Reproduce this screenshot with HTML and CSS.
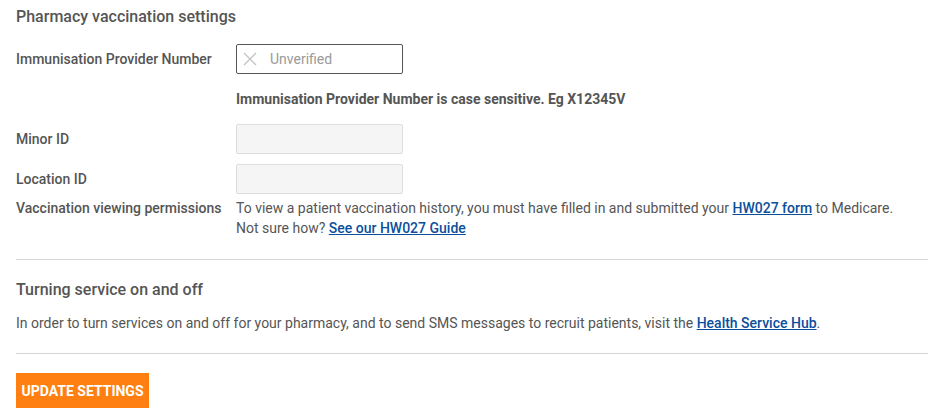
FILE: index.html
```html
<!DOCTYPE html>
<html>
<head>
<meta charset="utf-8">
<link rel="stylesheet" href="styles.css">
</head>
<body>
<div class="page">
  <h2 class="heading">Pharmacy vaccination settings</h2>
  <div class="row row-ipn">
    <div class="label">Immunisation Provider Number</div>
    <div class="field">
      <div class="input input-verify">
        <svg class="x-icon" width="14" height="14" viewBox="0 0 14 14"><path d="M1 1L13 13M13 1L1 13" stroke="#c4c4c4" stroke-width="1.4" fill="none"/></svg>
        <span class="placeholder">Unverified</span>
      </div>
    </div>
  </div>
  <div class="row row-note">
    <div class="label"></div>
    <div class="note">Immunisation Provider Number is case sensitive. Eg X12345V</div>
  </div>
  <div class="row row-input">
    <div class="label">Minor ID</div>
    <div class="field"><div class="input input-disabled"></div></div>
  </div>
  <div class="row row-input row-loc">
    <div class="label">Location ID</div>
    <div class="field"><div class="input input-disabled"></div></div>
  </div>
  <div class="row row-perm">
    <div class="label">Vaccination viewing permissions</div>
    <div class="text">To view a patient vaccination history, you must have filled in and submitted your <a href="#">HW027 form</a> to Medicare.<br>Not sure how? <a href="#">See our HW027 Guide</a></div>
  </div>
  <hr class="divider">
  <h2 class="heading heading-2">Turning service on and off</h2>
  <p class="para">In order to turn services on and off for your pharmacy, and to send SMS messages to recruit patients, visit the <a href="#">Health Service Hub</a>.</p>
  <hr class="divider divider-2">
  <button class="btn">UPDATE SETTINGS</button>
</div>
</body>
</html>
```
FILE: styles.css
```css
html, body { margin: 0; padding: 0; background: #fff; }
body { font-family: Roboto, "Noto Sans", sans-serif; color: #555; font-size: 14px; }
.page { padding: 0 0 0 16px; }
.heading { margin: 0; padding-top: 7px; font-size: 16px; font-weight: 500; color: #555; line-height: 20px; }
.row { display: flex; align-items: center; }
.label { width: 220px; font-size: 14px; font-weight: 500; color: #555; line-height: 20px; flex-shrink: 0; }
.row-ipn { margin-top: 17px; }
.input { box-sizing: border-box; width: 167px; height: 30px; border-radius: 2px; }
.input-verify { border: 1px solid #555; display: flex; align-items: center; padding-left: 6px; }
.x-icon { display: block; }
.placeholder { margin-left: 13px; color: #9a9a9a; font-size: 14px; }
.row-note { margin-top: 15px; }
.note { font-weight: 700; color: #555; line-height: 20px; }
.row-input { margin-top: 15px; }
.row-loc { margin-top: 10px; }
.input-disabled { background: #f5f5f5; border: 1px solid #ddd; }
.row-perm { align-items: flex-start; margin-top: 4px; }
.text { line-height: 20px; color: #555; }
a { color: #0b4f9c; text-decoration: underline; font-weight: 500; }
.divider { border: 0; border-top: 1px solid #d6d6d6; margin: 21px 0 0 0; }
.heading-2 { padding-top: 20px; }
.para { margin: 13px 0 0 0; line-height: 20px; }
.divider-2 { margin-top: 20px; }
.btn { display: block; margin-top: 19px; background: #ff7f11; color: #fff; border: 0; font-family: Roboto, sans-serif; font-weight: 700; font-size: 14px; width: 133px; height: 35px; padding: 0; cursor: pointer; }
```
